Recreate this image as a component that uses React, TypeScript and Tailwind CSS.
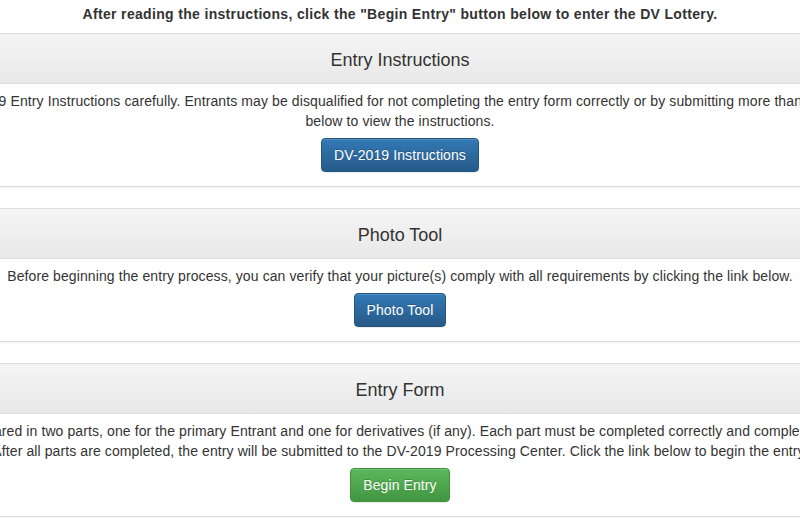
import React from "react";

function Panel({
  title,
  children,
  first,
}: {
  title: string;
  children: React.ReactNode;
  first?: boolean;
}) {
  return (
    <div
      className={`border border-[#dddddd] rounded-[4px] bg-white shadow-[0_1px_2px_rgba(0,0,0,0.05)] ${
        first ? "" : "mt-[21px]"
      }`}
    >
      <div className="h-[50px] pt-[3px] flex items-center justify-center border-b border-[#dddddd] bg-gradient-to-b from-[#f5f5f5] to-[#e8e8e8] rounded-t-[3px]">
        <h3 className="text-[18px] leading-[20px] text-[#333333] font-normal">{title}</h3>
      </div>
      <div className="px-[15px] pt-[7px] pb-[14px] text-center">{children}</div>
    </div>
  );
}

function Btn({ label, color }: { label: string; color: "blue" | "green" }) {
  const cls =
    color === "blue"
      ? "bg-gradient-to-b from-[#337ab7] to-[#265a88] border-[#245580]"
      : "bg-gradient-to-b from-[#5cb85c] to-[#419641] border-[#3e8f3e]";
  return (
    <button
      className={`inline-block h-[34px] px-[12px] text-[14px] leading-[20px] tracking-[0.1px] text-white rounded-[4px] border ${cls} [text-shadow:0_-1px_0_rgba(0,0,0,0.2)] shadow-[inset_0_1px_0_rgba(255,255,255,0.15),0_1px_1px_rgba(0,0,0,0.075)]`}
    >
      {label}
    </button>
  );
}

export default function App() {
  return (
    <div className="w-[800px] h-[518px] overflow-hidden bg-white flex justify-center font-['Liberation_Sans',Arial,sans-serif] text-[#333333] text-[14px] leading-[20px]">
      <div className="w-[1170px] shrink-0 px-[15px]">
        <p className="pt-[4px] mb-[9px] text-center font-bold text-[14px] leading-[20px] tracking-[0.33px]">
          After reading the instructions, click the "Begin Entry" button below to enter the DV Lottery.
        </p>

        <Panel title="Entry Instructions" first>
          <p className="mb-[7px] tracking-[0.1px]">
            Please read the DV-2019 Entry Instructions carefully. Entrants may be disqualified for not
            completing the entry form correctly or by submitting more than one entry. Click the link
            below to view the instructions.
          </p>
          <Btn label="DV-2019 Instructions" color="blue" />
        </Panel>

        <Panel title="Photo Tool">
          <p className="mb-[7px] tracking-[0.1px]">
            Before beginning the entry process, you can verify that your picture(s) comply with all
            requirements by clicking the link below.
          </p>
          <Btn label="Photo Tool" color="blue" />
        </Panel>

        <Panel title="Entry Form">
          <p className="mb-[7px] whitespace-nowrap tracking-[0.1px]">
            The entry form is prepared in two parts, one for the primary Entrant and one for derivatives
            (if any). Each part must be completed correctly and completely before submission.
            <br />
            After all parts are completed, the entry will be submitted to the DV-2019 Processing Center.
            Click the link below to begin the entry.
          </p>
          <Btn label="Begin Entry" color="green" />
        </Panel>
      </div>
    </div>
  );
}
